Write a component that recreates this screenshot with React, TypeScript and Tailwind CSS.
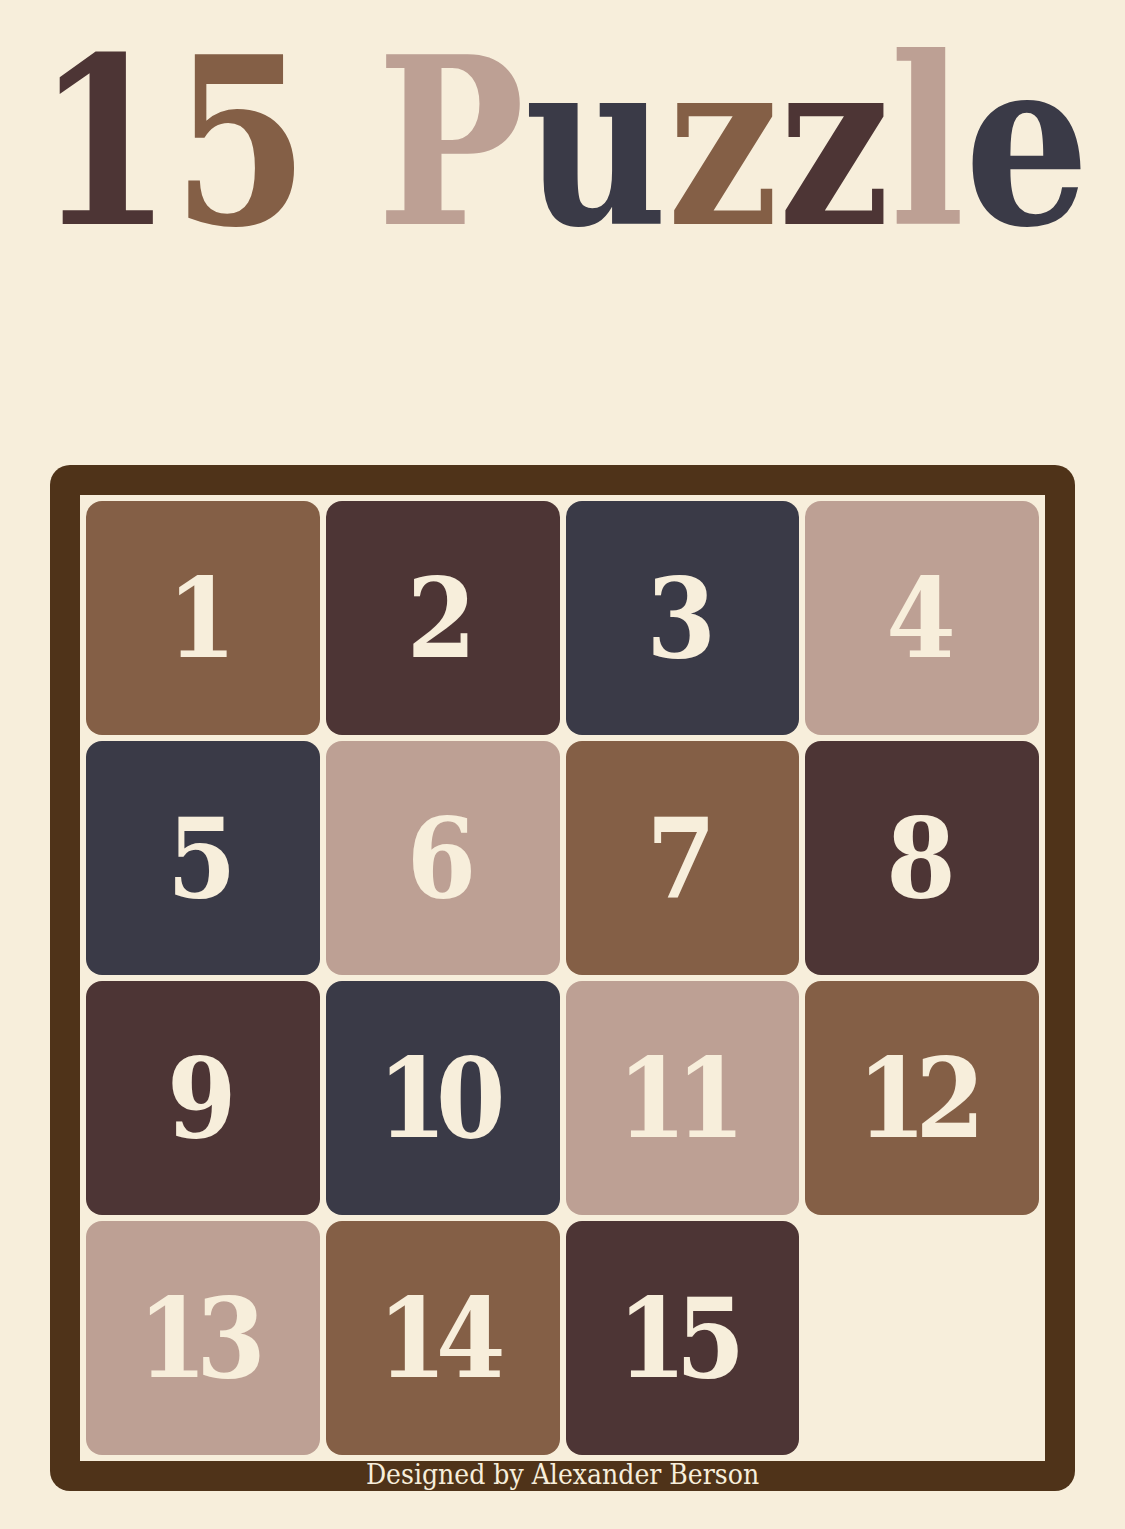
const TILE_COLORS: Record<string, string> = {
  brown: 'bg-[#845f46]',
  maroon: 'bg-[#4d3535]',
  slate: 'bg-[#3a3a47]',
  tan: 'bg-[#bda094]',
}

const TEXT_COLORS: Record<string, string> = {
  brown: 'text-[#845f46]',
  maroon: 'text-[#4d3535]',
  slate: 'text-[#3a3a47]',
  tan: 'text-[#bda094]',
}

const title: { ch: string; color: string }[] = [
  { ch: '1', color: 'maroon' },
  { ch: '5', color: 'brown' },
  { ch: ' ', color: 'brown' },
  { ch: 'P', color: 'tan' },
  { ch: 'u', color: 'slate' },
  { ch: 'z', color: 'brown' },
  { ch: 'z', color: 'maroon' },
  { ch: 'l', color: 'tan' },
  { ch: 'e', color: 'slate' },
]

const tiles: (string | null)[] = [
  'brown', 'maroon', 'slate', 'tan',
  'slate', 'tan', 'brown', 'maroon',
  'maroon', 'slate', 'tan', 'brown',
  'tan', 'brown', 'maroon', null,
]

export default function App() {
  return (
    <div
      className="min-h-[1529px] w-full bg-[#f7eedb] flex flex-col items-center"
      style={{ fontFamily: '"DejaVu Serif Condensed", "DejaVu Serif", serif' }}
    >
      {/* title */}
      <div className="h-[465px] pt-[27px] flex justify-center">
        <h1 className="text-[232px] leading-none font-bold whitespace-pre scale-x-[0.94] origin-center">
          {title.map((t, i) => (
            <span key={i} className={TEXT_COLORS[t.color]}>
              {t.ch}
            </span>
          ))}
        </h1>
      </div>

      {/* board */}
      <div className="w-[1025px] bg-[#4f3319] rounded-[20px] px-[30px] pt-[30px]">
        <div className="bg-[#f7eedb] grid grid-cols-4 gap-[6px] p-[6px]">
          {tiles.map((c, i) =>
            c ? (
              <div
                key={i}
                className={`${TILE_COLORS[c]} h-[234px] rounded-[16px] flex items-center justify-center text-[#f7eedb] text-[111px] font-bold tracking-[-0.1em]`}
              >
                <span className="-ml-[0.12em]">{i + 1}</span>
              </div>
            ) : (
              <div key={i} className="h-[234px]" />
            )
          )}
        </div>
        <div className="h-[30px] text-center text-[#f7eedb] text-[28px] leading-[28px] whitespace-nowrap">
          Designed by Alexander Berson
        </div>
      </div>
    </div>
  )
}
